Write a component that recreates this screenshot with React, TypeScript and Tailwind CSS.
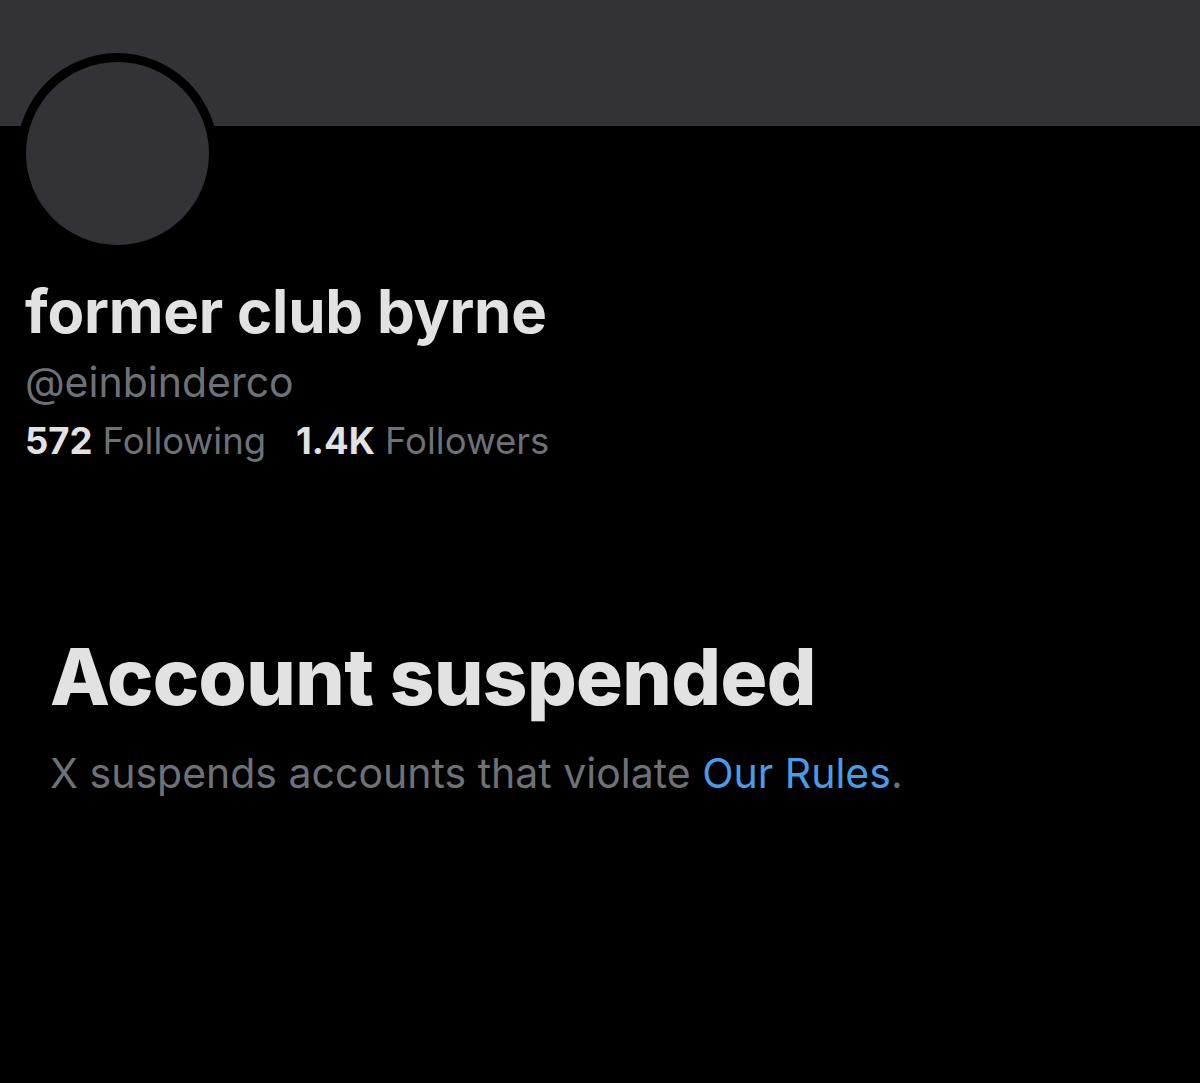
import React from 'react';

const App: React.FC = () => {
  return (
    <div
      className="w-[1200px] h-[1083px] bg-black overflow-hidden"
      style={{ fontFamily: 'Inter, "Noto Sans", sans-serif' }}
    >
      {/* Banner */}
      <div className="h-[126px] bg-[#333337]" />

      {/* Avatar + profile info */}
      <div className="px-[25px]">
        <div className="relative h-[130px]">
          <div className="absolute -top-[73px] -left-[8px] w-[201px] h-[201px] rounded-full bg-black p-[9px]">
            <div className="w-full h-full rounded-full bg-[#333337]" />
          </div>
        </div>

        <h1 className="mt-[19px] text-[60px] leading-[72px] font-bold tracking-[-0.2px] text-[#e2e2e2]">
          former club byrne
        </h1>
        <div className="mt-[11px] text-[41px] leading-[48px] text-[#6e7176]">@einbinderco</div>
        <div className="mt-[13px] flex text-[36.5px] leading-[44px]">
          <span className="font-bold text-[#e2e2e2]">572</span>
          <span className="ml-[10px] text-[#6e7176]">Following</span>
          <span className="ml-[30px] font-bold text-[#e2e2e2]">1.4K</span>
          <span className="ml-[10px] text-[#6e7176]">Followers</span>
        </div>
      </div>

      {/* Suspended notice */}
      <div className="px-[50px] mt-[169px]">
        <h2 className="text-[78px] leading-[90px] font-extrabold tracking-[-0.6px] text-[#e2e2e2]">
          Account suspended
        </h2>
        <p className="mt-[27px] text-[41px] leading-[48px] text-[#6e7176]">
          X suspends accounts that violate <span className="text-[#4a9be8]">Our Rules</span>.
        </p>
      </div>
    </div>
  );
};

export default App;
